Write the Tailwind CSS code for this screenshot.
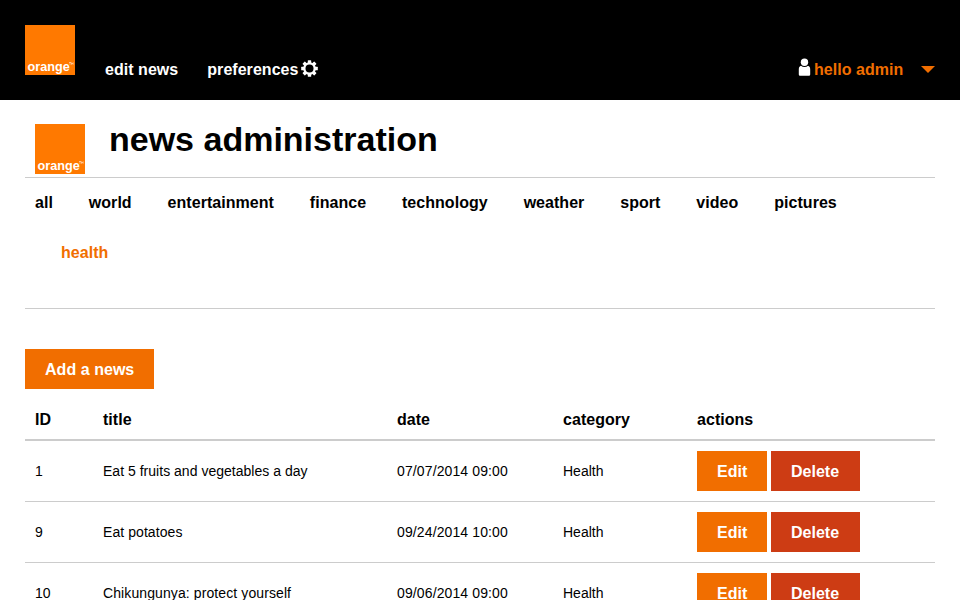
<!DOCTYPE html>
<html lang="en">
<head>
<meta charset="utf-8">
<title>news administration</title>
<script src="https://cdn.jsdelivr.net/npm/@tailwindcss/browser@4"></script>
</head>
<body class="h-[600px] overflow-hidden bg-white font-['Liberation_Sans',Arial,sans-serif] text-base leading-5 font-bold tracking-[0.04px] text-black">
<header class="flex h-[100px] bg-black px-[25px] pt-[25px] text-white">
  <svg class="h-[50px] w-[50px] shrink-0 tracking-normal" viewBox="0 0 50 50"><rect width="50" height="50" fill="#ff7900"/><text x="2.5" y="45.8" font-size="12.8" textLength="42.3" lengthAdjust="spacingAndGlyphs" fill="#fff">orange</text><path d="M44 37.5h2M45 37.5v2.2M46.5 39.7v-2l.8 1 .8-1v2" fill="none" stroke="#fff" stroke-width=".5"/></svg>
  <nav class="ml-[30px] flex h-5 pt-[35px]">
    <a class="w-[102.3px]">edit news</a>
    <a class="flex whitespace-nowrap"><span class="w-[93.7px]">preferences</span><svg class="h-[17px] w-[17px]" viewBox="0 0 17 17"><g fill="#fff"><g id="teeth"><rect x="6.8" y="0.2" width="3.4" height="16.6" rx=".5"/><rect x="0.2" y="6.8" width="16.6" height="3.4" rx=".5"/></g><use href="#teeth" transform="rotate(45 8.5 8.5)"/><circle cx="8.5" cy="8.5" r="6.3"/></g><circle cx="8.5" cy="8.5" r="4" fill="#000"/></svg></a>
  </nav>
  <div class="ml-auto flex h-5 pt-[35px] text-[#f16e00]">
    <svg class="mt-[-2px] mr-[3px] h-[18px] w-[13px] shrink-0" viewBox="0 0 13 18"><path d="M.8 16.5V11.5Q.8 8.2 3 7.8Q4.4 9 6.5 9T10 7.8Q12.2 8.2 12.2 11.5V16.5Q12.2 17.7 11 17.7H2Q.8 17.7.8 16.5Z" fill="#fff"/><circle cx="6.5" cy="4.2" r="3.7" fill="#fff"/></svg>
    <span class="w-[88px] whitespace-nowrap">hello admin</span>
    <svg class="mt-[6px] ml-[19px] h-[7px] w-[14px]" viewBox="0 0 14 7"><path d="M0 0H14L7 7Z" fill="#f16e00"/></svg>
  </div>
</header>
<main class="px-[25px]">
  <div class="flex h-[78px] border-b border-[#ccc] pt-6 pl-[10px]">
    <svg class="h-[50px] w-[50px] shrink-0 tracking-normal" viewBox="0 0 50 50"><rect width="50" height="50" fill="#ff7900"/><text x="2.5" y="45.8" font-size="12.8" textLength="42.3" lengthAdjust="spacingAndGlyphs" fill="#fff">orange</text><path d="M44 37.5h2M45 37.5v2.2M46.5 39.7v-2l.8 1 .8-1v2" fill="none" stroke="#fff" stroke-width=".5"/></svg>
    <h1 class="ml-6 text-[34px] leading-[30px] tracking-normal whitespace-nowrap">news administration</h1>
  </div>
  <nav class="h-[131px] border-b border-[#ccc] pt-[15px] pl-[10px]">
    <div class="flex gap-[35.9px]"><a>all</a><a>world</a><a>entertainment</a><a>finance</a><a>technology</a><a>weather</a><a>sport</a><a>video</a><a>pictures</a></div>
    <a class="mt-[30px] ml-[26px] block text-[#f16e00]">health</a>
  </nav>
  <button class="mt-10 block h-10 w-[129px] bg-[#f16e00] pt-0.5 pl-5 text-left whitespace-nowrap text-white">Add a news</button>
  <section>
    <div class="grid h-[52px] grid-cols-[68px_294px_166px_134px_1fr] border-b-2 border-[#ccc] pt-[21px] pl-[10px]"><span>ID</span><span>title</span><span>date</span><span>category</span><span>actions</span></div>
    <div class="grid h-[61px] grid-cols-[68px_294px_166px_134px_1fr] items-center border-b border-[#ccc] pl-[10px] text-sm font-normal tracking-normal"><span>1</span><span class="tracking-[0.02px]">Eat 5 fruits and vegetables a day</span><span class="tracking-[0.12px]">07/07/2014 09:00</span><span>Health</span><div class="flex gap-1 text-base font-bold text-white"><button class="h-10 w-[70px] bg-[#f16e00] pt-0.5 pl-5 text-left">Edit</button><button class="h-10 w-[89px] bg-[#cd3c14] pt-0.5 pl-5 text-left">Delete</button></div></div>
    <div class="grid h-[61px] grid-cols-[68px_294px_166px_134px_1fr] items-center border-b border-[#ccc] pl-[10px] text-sm font-normal tracking-normal"><span>9</span><span class="tracking-[0.07px]">Eat potatoes</span><span class="tracking-[0.12px]">09/24/2014 10:00</span><span>Health</span><div class="flex gap-1 text-base font-bold text-white"><button class="h-10 w-[70px] bg-[#f16e00] pt-0.5 pl-5 text-left">Edit</button><button class="h-10 w-[89px] bg-[#cd3c14] pt-0.5 pl-5 text-left">Delete</button></div></div>
    <div class="grid h-[61px] grid-cols-[68px_294px_166px_134px_1fr] items-center border-b border-[#ccc] pl-[10px] text-sm font-normal tracking-normal"><span>10</span><span class="tracking-[0.1px]">Chikungunya: protect yourself</span><span class="tracking-[0.12px]">09/06/2014 09:00</span><span>Health</span><div class="flex gap-1 text-base font-bold text-white"><button class="h-10 w-[70px] bg-[#f16e00] pt-0.5 pl-5 text-left">Edit</button><button class="h-10 w-[89px] bg-[#cd3c14] pt-0.5 pl-5 text-left">Delete</button></div></div>
  </section>
</main>
</body>
</html>
